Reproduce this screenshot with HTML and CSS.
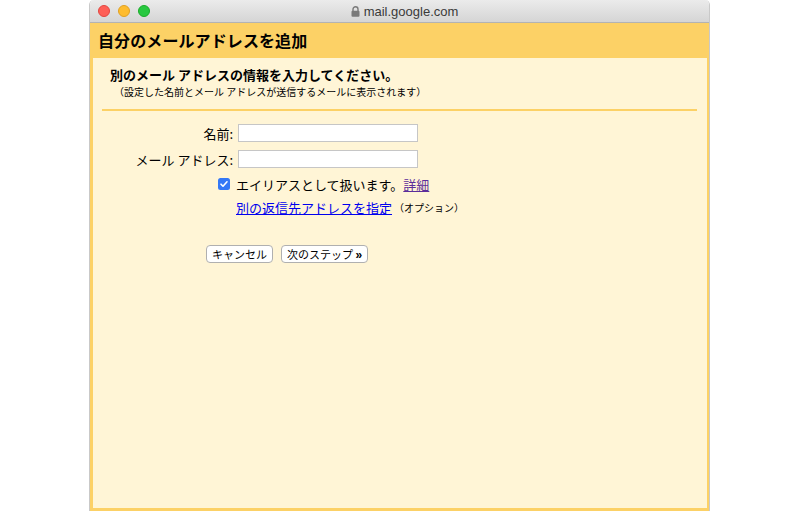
FILE: index.html
```html
<!DOCTYPE html>
<html lang="ja">
<head>
<meta charset="utf-8">
<link rel="stylesheet" href="styles.css">
</head>
<body>
<div class="window">
  <div class="titlebar">
    <div class="lights">
      <span class="light red"></span>
      <span class="light yellow"></span>
      <span class="light green"></span>
    </div>
    <div class="url">
      <svg class="lock" width="9" height="11" viewBox="0 0 9 11"><path d="M2 5V3.3a2.5 2.5 0 0 1 5 0V5" fill="none" stroke="#7a7a7a" stroke-width="1.4"/><rect x="0.5" y="4.8" width="8" height="6" rx="1" fill="#7a7a7a"/></svg>
      <span>mail.google.com</span>
    </div>
  </div>
  <div class="header">自分のメールアドレスを追加</div>
  <div class="content">
    <div class="intro">
      <div class="lead">別のメール アドレスの情報を入力してください。</div>
      <div class="sub">（設定した名前とメール アドレスが送信するメールに表示されます）</div>
    </div>
    <div class="sep"></div>
    <div class="form">
      <div class="row">
        <label class="label">名前:</label>
        <input class="field" type="text">
      </div>
      <div class="row">
        <label class="label">メール アドレス:</label>
        <input class="field" type="text">
      </div>
      <div class="row check-row">
        <span class="checkbox"><svg width="12" height="12" viewBox="0 0 12 12"><rect width="12" height="12" rx="2.5" fill="#3478f6"/><path d="M3 6.2l2 2 4-4.4" fill="none" stroke="#fff" stroke-width="1.6" stroke-linecap="round" stroke-linejoin="round"/></svg></span>
        <span class="check-text">エイリアスとして扱います。<a class="visited" href="#">詳細</a></span>
      </div>
      <div class="row reply-row">
        <a class="link" href="#">別の返信先アドレスを指定</a><span class="opt">（オプション）</span>
      </div>
      <div class="buttons">
        <button class="btn">キャンセル</button>
        <button class="btn">次のステップ <span class="raquo">»</span></button>
      </div>
    </div>
  </div>
</div>
</body>
</html>
```

FILE: styles.css
```css
html, body {
  margin: 0;
  padding: 0;
  background: #ffffff;
}
body {
  font-family: "Noto Sans CJK JP", "Noto Sans", sans-serif;
  color: #000;
}
.window {
  margin-left: 89px;
  width: 621px;
  height: 511px;
  display: flex;
  flex-direction: column;
  border-left: 1px solid #c9c9c9;
  border-right: 1px solid #c9c9c9;
  box-sizing: border-box;
  border-radius: 5px 5px 0 0;
  overflow: hidden;
}
.titlebar {
  height: 23px;
  flex: none;
  background: linear-gradient(#ebebeb, #d5d5d5);
  border-bottom: 1px solid #b3b3b3;
  box-sizing: border-box;
  position: relative;
  display: flex;
  align-items: center;
  justify-content: center;
}
.lights {
  position: absolute;
  left: 8px;
  top: 5px;
  display: flex;
  gap: 8px;
}
.light {
  width: 12px;
  height: 12px;
  border-radius: 50%;
  box-sizing: border-box;
}
.red { background: #fe5f57; border: 1px solid #e14640; }
.yellow { background: #febc2e; border: 1px solid #dfa023; }
.green { background: #28c840; border: 1px solid #1aab29; }
.url {
  display: flex;
  align-items: center;
  gap: 4px;
  font-family: "Liberation Sans", Arial, sans-serif;
  font-size: 13px;
  color: #3a3a3a;
  margin-left: 10px;
}
.lock { display: block; margin-top: 1px; }
.header {
  flex: none;
  height: 35px;
  background: #fcd166;
  font-weight: bold;
  font-size: 16px;
  line-height: 35px;
  padding-left: 8px;
  letter-spacing: 0.1px;
}
.content {
  flex: 1;
  background: #fff5d6;
  border: 3px solid #fcd166;
  border-top: none;
  border-right-width: 2px;
  display: flex;
  flex-direction: column;
}
.intro {
  padding: 7px 0 0 17px;
}
.lead {
  font-weight: bold;
  font-size: 13px;
  line-height: 20px;
}
.sub {
  font-size: 10px;
  line-height: 14px;
  padding-left: 4px;
}
.sep {
  height: 2px;
  background: #fcd166;
  margin: 10px 10px 0 9px;
}
.form {
  padding-top: 13px;
  display: flex;
  flex-direction: column;
}
.row {
  display: flex;
  align-items: center;
  height: 18px;
  margin-bottom: 8px;
}
.label {
  width: 140px;
  text-align: right;
  font-size: 13px;
  padding-right: 5px;
}
.field {
  width: 180px;
  height: 18px;
  box-sizing: border-box;
  border: 1px solid #c6c6c6;
  background: #fff;
  margin: 0;
  padding: 0;
}
.check-row {
  padding-left: 125px;
  margin-top: -1px;
  margin-bottom: 5px;
}
.checkbox {
  width: 12px;
  height: 12px;
  margin-right: 6px;
  display: flex;
}
.check-text {
  font-size: 13px;
}
.visited {
  color: #5b2d9a;
}
.reply-row {
  padding-left: 143px;
}
.link {
  color: #0000ee;
  font-size: 13px;
}
.opt {
  font-size: 10px;
  margin-left: 2px;
}
.buttons {
  display: flex;
  gap: 8px;
  padding-left: 113px;
  margin-top: 21px;
}
.btn {
  font-family: "Noto Sans CJK JP", sans-serif;
  font-size: 11px;
  height: 18px;
  line-height: 16px;
  padding: 0 5px;
  background: #fff;
  border: 1px solid #b0b0b0;
  border-radius: 4px;
  color: #000;
}
.raquo {
  font-family: "Liberation Sans", Arial, sans-serif;
  font-weight: bold;
  font-size: 12px;
}
```
